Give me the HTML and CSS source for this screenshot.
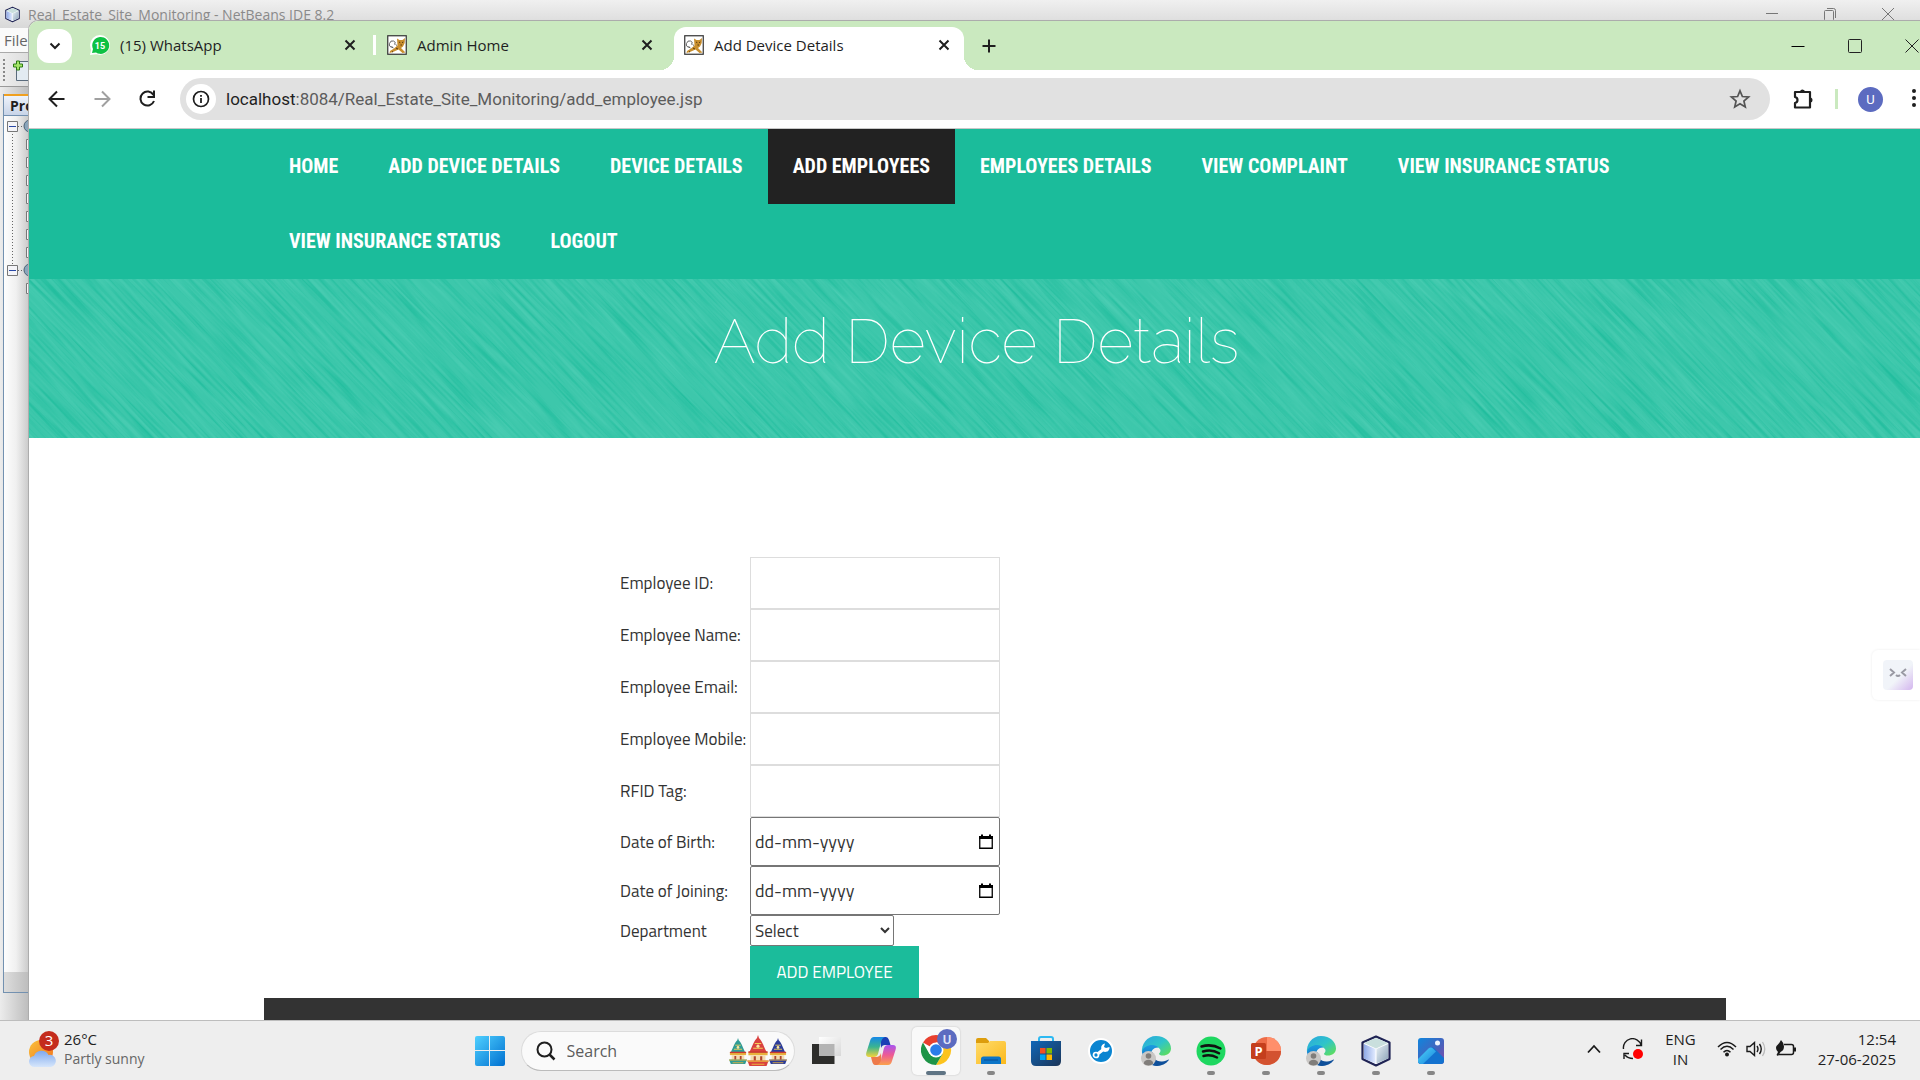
FILE: index.html
```html
<!DOCTYPE html>
<html lang="en">
<head>
<meta charset="utf-8">
<title>Add Device Details</title>
<link rel="stylesheet" href="styles.css">
</head>
<body>
<svg class="defs" aria-hidden="true">
  <defs>
    <linearGradient id="win" x1="0" y1="0" x2="1" y2="1"><stop offset="0" stop-color="#4fd0ff"/><stop offset="1" stop-color="#0070d0"/></linearGradient>
    <linearGradient id="sun" x1="0" y1="0" x2="1" y2="1"><stop offset="0" stop-color="#f9c23c"/><stop offset="1" stop-color="#f2711c"/></linearGradient>
    <linearGradient id="cloud" x1="0" y1="0" x2="0" y2="1"><stop offset="0" stop-color="#7fa9ee"/><stop offset="1" stop-color="#d6e6fb"/></linearGradient>
    <linearGradient id="fold" x1="0" y1="0" x2="1" y2="1"><stop offset="0" stop-color="#ffdb6b"/><stop offset="1" stop-color="#fbb91c"/></linearGradient>
    <linearGradient id="store" x1="0" y1="0" x2="1" y2="1"><stop offset="0" stop-color="#1067b8"/><stop offset="1" stop-color="#1c3557"/></linearGradient>
    <linearGradient id="edgeA" x1="0" y1="0" x2="1" y2="1"><stop offset="0" stop-color="#2aa6e0"/><stop offset=".5" stop-color="#2fc4c9"/><stop offset="1" stop-color="#66e24b"/></linearGradient>
    <linearGradient id="edgeB" x1="0" y1="0" x2="0" y2="1"><stop offset="0" stop-color="#1b9be0"/><stop offset="1" stop-color="#1266b5"/></linearGradient>
    <linearGradient id="cubeL" x1="0" y1="0" x2="1" y2="0"><stop offset="0" stop-color="#8fa9e6"/><stop offset="1" stop-color="#e3ecff"/></linearGradient>
    <linearGradient id="cubeR" x1="0" y1="0" x2="1" y2="1"><stop offset="0" stop-color="#e8f0f5"/><stop offset="1" stop-color="#8ba3b8"/></linearGradient>
    <linearGradient id="photo" x1="0" y1="0" x2="1" y2="1"><stop offset="0" stop-color="#0f86dd"/><stop offset=".6" stop-color="#4a60bb"/><stop offset="1" stop-color="#8a4aa8"/></linearGradient>
    <linearGradient id="peak" x1="0" y1="0" x2="1" y2="1"><stop offset="0" stop-color="#4fd6f7"/><stop offset="1" stop-color="#1780de"/></linearGradient>
    <linearGradient id="copA" x1="0" y1="0" x2="0" y2="1"><stop offset="0" stop-color="#1588e8"/><stop offset=".5" stop-color="#3bb58f"/><stop offset="1" stop-color="#f5d33a"/></linearGradient>
    <linearGradient id="copB" x1="0" y1="0" x2="0" y2="1"><stop offset="0" stop-color="#a855f0"/><stop offset=".5" stop-color="#ee5a95"/><stop offset="1" stop-color="#fba24a"/></linearGradient>
    <linearGradient id="pane" x1="0" y1="0" x2="1" y2="1"><stop offset="0" stop-color="#ffffff"/><stop offset="1" stop-color="#d8d8d8"/></linearGradient>
    <filter id="scratchDark" x="0" y="0" width="1" height="1" color-interpolation-filters="sRGB"><feTurbulence type="fractalNoise" baseFrequency=".012 .34" numOctaves="2" seed="4"/><feColorMatrix values="0 0 0 0 .09  0 0 0 0 .73  0 0 0 0 .6  2.6 0 0 0 -1.150"/></filter>
    <filter id="scratchLight" x="0" y="0" width="1" height="1" color-interpolation-filters="sRGB"><feTurbulence type="fractalNoise" baseFrequency=".015 .3" numOctaves="2" seed="9"/><feColorMatrix values="0 0 0 0 .38  0 0 0 0 .84  0 0 0 0 .75  2.4 0 0 0 -1.050"/></filter>
    <symbol id="cube" viewBox="0 0 30 32">
      <path d="M15 1.5 28.500 7.500V24L15 30.500 1.500 24V7.500Z" fill="#fff" stroke="#1f2354" stroke-width="2.200" stroke-linejoin="round"/>
      <path d="M15 3 27 8 15 13.500 3 8Z" fill="#c9dfdd"/><path d="M3 9l11.500 5v14.500L3 23.500Z" fill="url(#cubeL)"/><path d="M27 9l-11.500 5v14.500L27 23.500Z" fill="url(#cubeR)"/>
    </symbol>
    <symbol id="tomcat" viewBox="0 0 20 20">
      <rect x=".75" y=".75" width="18.500" height="18.500" fill="#fff" stroke="#333" stroke-width="1.200"/>
      <path d="M10 3.500l2.500 1.500h3L18 3l-.3 5-1.700 3.500-2 1.500 4.500 4.500-3 .5-4-3.500L6 17l-3.500 1 .5-2 4-2.500 3.500-3Z" fill="#c98f2e"/>
      <path d="M12 7l1.300.7m3-.7-1.300.7M13.500 10h1.500M9 13l2 1M5 16.500l1 .5" stroke="#4b300c" stroke-width=".9"/>
      <path d="M6 12.500Q1.500 12 2.500 8.500T6.500 6t1 3.500M4.500 11.500l2 1.500M8.500 9.500l1.500 1" fill="none" stroke="#555" stroke-width=".9"/>
    </symbol>
    <symbol id="close" viewBox="0 0 12 12"><path d="M1.500 1.500l9 9M10.500 1.500l-9 9" stroke="#1f1f1f" stroke-width="2" fill="none"/></symbol>
    <symbol id="edge" viewBox="0 0 30 30">
      <path d="M1 17C0 8 6 0 15 0s15 6 15 12.500c0 4.500-4 7-8 7-2.500 0-4-.8-4-1.800 0-.8 1.500-1.200 1.500-3 0-2.500-3-4-6-4C8 10.700 4 13 1 17Z" fill="url(#edgeA)"/>
      <path d="M1 16c1-5 6-7 10-7 3 0 5 1 6.500 2.500C12 11 9 16 10.500 20.500c1.200 4 5 8 9.500 8.500-9 3-18-3-19-13Z" fill="url(#edgeB)"/>
      <path d="M12 16c-1.500 5 3 10 9 9.500 3-.3 5-1.200 6-1.800.5-.3 1 .2.700.6C25 28 20.500 30 16 30c-5 0-8-5-6.500-10 .4-1.600 1.400-3 2.500-4Z" fill="#0e4f9a"/>
      <circle cx="7.500" cy="22.500" r="7.500" fill="#c9c7c5"/><circle cx="7.500" cy="20" r="2.800" fill="#807d7a"/><path d="M2.800 27.500c0-5 9.400-5 9.400 0-2 2.500-7 2.800-9.400 0Z" fill="#807d7a"/>
    </symbol>
    <symbol id="calendar" viewBox="0 0 14 16"><path d="M.75 3h12.500v11.250H.75Z" fill="none" stroke="#000" stroke-width="1.300"/><path d="M0 2h14v3H0ZM2 .5h2v2H2ZM10 .5h2v2h-2Z"/></symbol>
    <symbol id="chariot" viewBox="0 0 20 30">
      <path d="M10 0l1 3h-2ZM10 2c4 3 5 8 8 14H2C5 10 6 5 10 2Z"/>
      <path d="M1 16h18v3H1Z" fill="#e9b23c"/><path d="M1 16h18" stroke="#c93a32" stroke-width="1.500"/><path d="M3 19h14v6H3Z" fill="#f4dcb0"/><path d="M6 20h2v5H6ZM12 20h2v5h-2Z" fill="#b0472e"/>
      <path d="M7 8h6M5.500 12.500h9" stroke="#f3cf55" stroke-width="1"/><circle cx="10" cy="10.500" r="1.500" fill="#fbe7a0"/>
      <path d="M0 24h20l-2 5H2Z"/><path d="M0 24.500h20M4 27.500h12" stroke="#e9b23c" stroke-width="1"/>
    </symbol>
  </defs>
</svg>

<main class="desktop">
  <section class="ide" aria-label="NetBeans IDE">
    <header class="ide-title">
      <svg class="ide-logo"><use href="#cube"/></svg>
      <span class="ide-name">Real_Estate_Site_Monitoring - NetBeans IDE 8.2</span>
      <svg class="ide-ctl" viewBox="0 0 14 14"><path d="M1 6.500h12" stroke="#777"/></svg>
      <svg class="ide-ctl" viewBox="0 0 14 14"><path d="M1.500 4.500q0-1 1-1h7q1 0 1 1v8q0 1-1 1h-7q-1 0-1-1ZM4 1.500h6.500q2 0 2 2V11" fill="none" stroke="#777"/></svg>
      <svg class="ide-ctl" viewBox="0 0 14 14"><path d="M1 1l12 12M13 1 1 13" stroke="#777"/></svg>
    </header>
    <div class="ide-menu">File</div>
    <div class="ide-tools"><svg width="30" height="34" viewBox="0 0 30 34"><path d="M4 6v22" stroke="#888" stroke-width="2" stroke-dasharray="2 2"/><path d="M16.500 9v18.500H30V8.500H20Z" fill="#e3ebf2" stroke="#5a6b7c"/><path d="M16.500 8h3v3h3v3h-3v3h-3v-3h-3v-3h3Z" fill="#a5e668" stroke="#2c7a14"/></svg></div>
    <div class="ide-panel">
      <div class="ide-tab">Projects</div>
      <svg class="ide-tree" width="26" height="190" viewBox="0 0 26 190">
        <path d="M8.500 18v132" stroke="#666" stroke-dasharray="1 2"/><path d="M14 10.500h6M14 154.500h6" stroke="#666" stroke-dasharray="1 2"/>
        <g fill="#f4f4f8" stroke="#777"><path d="M3.500 5.500h10v10h-10ZM3.500 149.500h10v10h-10Z"/><path d="M22.500 23.500h10v10h-10ZM22.500 41.500h10v10h-10ZM22.500 59.500h10v10h-10ZM22.500 77.500h10v10h-10ZM22.500 95.500h10v10h-10ZM22.500 113.500h10v10h-10ZM22.500 131.500h10v10h-10ZM22.500 167.500h10v10h-10Z"/></g>
        <path d="M5 10.500h7M5 154.500h7" stroke="#2847a5"/><circle cx="26" cy="10" r="6" fill="#8aa5bb" stroke="#4a6175"/><circle cx="26" cy="154" r="6" fill="#8aa5bb" stroke="#4a6175"/>
      </svg>
      <div class="ide-scroll"></div>
    </div>
  </section>

  <section class="browser" aria-label="Browser">
    <header class="tabs">
      <button class="tab-search" aria-label="Search tabs"><svg width="12" height="8" viewBox="0 0 12 8"><path d="M1.500 1.500 6 6l4.500-4.500" fill="none" stroke="#1f1f1f" stroke-width="2"/></svg></button>
      <div class="tab tab-split">
        <svg class="favicon" viewBox="0 0 20 20"><circle cx="10" cy="10" r="10" fill="#fff"/><path d="M0 20l1.500-7L8 19Z" fill="#fff"/><path d="M2 18l1-4a8.500 8.500 0 1 1 3 3.500Z" fill="#0dc143"/><text x="10" y="13.500" text-anchor="middle" class="count">15</text></svg>
        <span class="tab-name">(15) WhatsApp</span><button class="tab-x" aria-label="Close tab"><svg><use href="#close"/></svg></button>
      </div>
      <div class="tab">
        <svg class="favicon"><use href="#tomcat"/></svg>
        <span class="tab-name">Admin Home</span><button class="tab-x" aria-label="Close tab"><svg><use href="#close"/></svg></button>
      </div>
      <div class="tab tab-active">
        <svg class="favicon"><use href="#tomcat"/></svg>
        <span class="tab-name">Add Device Details</span><button class="tab-x" aria-label="Close tab"><svg><use href="#close"/></svg></button>
      </div>
      <button class="tab-new" aria-label="New tab"><svg width="14" height="14" viewBox="0 0 14 14"><path d="M7 .5v13M.5 7h13" stroke="#1f1f1f" stroke-width="2"/></svg></button>
      <div class="win-ctl">
        <button aria-label="Minimise"><svg width="16" height="16" viewBox="0 0 16 16"><path d="M1.500 8.500h13" stroke="#000"/></svg></button>
        <button aria-label="Maximise"><svg width="16" height="16" viewBox="0 0 16 16"><rect x="1.500" y="1.500" width="13" height="13" rx="1" fill="none" stroke="#222"/></svg></button>
        <button aria-label="Close"><svg width="16" height="16" viewBox="0 0 16 16"><path d="M1.500 1.500l13 13M14.500 1.500l-13 13" stroke="#222"/></svg></button>
      </div>
    </header>
    <div class="toolbar">
      <button aria-label="Back"><svg width="24" height="24" viewBox="0 0 24 24"><path d="M19.500 12H5.500M12 4.500 4.500 12l7.500 7.500" fill="none" stroke="#1f1f1f" stroke-width="2"/></svg></button>
      <button aria-label="Forward"><svg width="24" height="24" viewBox="0 0 24 24"><path d="M4.500 12h14M12 4.500l7.500 7.500-7.500 7.500" fill="none" stroke="#a0a0a0" stroke-width="2"/></svg></button>
      <button aria-label="Reload"><svg width="24" height="24" viewBox="0 0 24 24"><path d="M18.500 8A7 7 0 1 0 19 14" fill="none" stroke="#1f1f1f" stroke-width="2"/><path d="M20 3.500V11h-7.500V9H18V3.500Z" fill="#1f1f1f"/></svg></button>
      <div class="address">
        <button class="site-info" aria-label="Site information"><svg width="18" height="18" viewBox="0 0 18 18"><circle cx="9" cy="9" r="7.500" fill="none" stroke="#1f1f1f" stroke-width="1.700"/><path d="M9 8v5M9 5v1.800" stroke="#1f1f1f" stroke-width="1.800"/></svg></button>
        <span class="url"><span class="host">localhost</span>:8084/Real_Estate_Site_Monitoring/add_employee.jsp</span>
        <button aria-label="Bookmark"><svg width="22" height="22" viewBox="0 0 22 22"><path d="M11 2.800l2.400 5.700 6.200.5-4.700 4 1.400 6L11 15.800 5.700 19l1.400-6L2.400 9l6.200-.5Z" fill="none" stroke="#555" stroke-width="1.700"/></svg></button>
      </div>
      <div class="bar-end">
        <button aria-label="Extensions"><svg width="24" height="24" viewBox="0 0 24 24"><path d="M4 5h15v15.500H4V16q2.500-.5 2.500-3T4 10Z" fill="none" stroke="#1f1f1f" stroke-width="2.200" stroke-linejoin="round"/><path d="M9 5a2.500 2.500 0 0 1 5 0ZM19 10.500a2.500 2.500 0 0 1 0 5Z" fill="#1f1f1f"/></svg></button>
        <span class="bar-sep"></span>
        <button class="avatar" aria-label="Profile">U</button>
        <button aria-label="Menu"><svg width="17" height="24" viewBox="0 0 17 24"><g fill="#1f1f1f"><circle cx="11" cy="4" r="2"/><circle cx="11" cy="11" r="2"/><circle cx="11" cy="18" r="2"/></g></svg></button>
      </div>
    </div>

    <div class="page">
      <nav class="nav">
        <a href="#">Home</a><a href="#">Add Device Details</a><a href="#">Device Details</a><a href="#" class="current">Add Employees</a><a href="#">Employees Details</a><a href="#">View Complaint</a><a href="#">View Insurance Status</a><a href="#">View Insurance Status</a><a href="#">Logout</a>
      </nav>
      <div class="banner">
        <svg class="scratches" aria-hidden="true"><g transform="rotate(46)"><rect class="dark" x="0" y="-1500" width="1600" height="1700" filter="url(#scratchDark)"/><rect class="light" x="0" y="-1500" width="1600" height="1700" filter="url(#scratchLight)"/></g></svg>
        <h1>Add Device Details</h1>
      </div>
      <form class="form">
        <table>
          <tr><td><label for="eid">Employee ID:</label></td><td><input class="field" id="eid" type="text"></td></tr>
          <tr><td><label for="ename">Employee Name:</label></td><td><input class="field" id="ename" type="text"></td></tr>
          <tr><td><label for="email">Employee Email:</label></td><td><input class="field" id="email" type="text"></td></tr>
          <tr><td><label for="mobile">Employee Mobile:</label></td><td><input class="field" id="mobile" type="text"></td></tr>
          <tr><td><label for="rfid">RFID Tag:</label></td><td><input class="field" id="rfid" type="text"></td></tr>
          <tr><td><label for="dob">Date of Birth:</label></td><td><div class="date"><input id="dob" type="text" placeholder="dd-mm-yyyy"><button type="button" aria-label="Pick date of birth"><svg><use href="#calendar"/></svg></button></div></td></tr>
          <tr><td><label for="doj">Date of Joining:</label></td><td><div class="date"><input id="doj" type="text" placeholder="dd-mm-yyyy"><button type="button" aria-label="Pick date of joining"><svg><use href="#calendar"/></svg></button></div></td></tr>
          <tr><td><label for="dept">Department</label></td><td><select id="dept"><option>Select</option></select></td></tr>
          <tr><td></td><td><button class="submit" type="button">Add Employee</button></td></tr>
        </table>
      </form>
      <footer class="footer"></footer>
      <div class="helper"><svg width="30" height="30" viewBox="0 0 30 30"><path d="M7 9l4 3.500L7 16M23 9l-4 3.500L23 16M13 15q2 2 4 0" fill="none" stroke="#9a9aa4" stroke-width="2"/></svg></div>
    </div>
  </section>
</main>

<footer class="taskbar">
  <div class="weather">
    <svg width="34" height="38" viewBox="0 0 34 38"><circle cx="14" cy="22" r="12" fill="url(#sun)"/><path d="M8 37a5.500 5.500 0 0 1-1-11 8 8 0 0 1 14.500-1A6 6 0 0 1 24 37Z" fill="url(#cloud)"/><circle cx="22" cy="11" r="10" fill="#c42b1c"/><text x="22" y="16" text-anchor="middle" class="badge">3</text></svg>
    <div class="lines"><span>26°C</span><span class="muted">Partly sunny</span></div>
  </div>
  <div class="apps">
    <button aria-label="Start"><svg width="30" height="30" viewBox="0 0 30 30"><rect width="30" height="30" rx="2" fill="url(#win)"/><path d="M14.500 0v30M0 14.500h30" stroke="#eee"/></svg></button>
    <label class="search"><svg width="20" height="20" viewBox="0 0 20 20"><circle cx="8.500" cy="8.500" r="7" fill="none" stroke="#1f1f1f" stroke-width="2"/><path d="M13.500 13.500l5 5" stroke="#1f1f1f" stroke-width="2.500"/></svg><input type="text" placeholder="Search" aria-label="Search"><svg width="60" height="32" viewBox="0 0 60 32"><use href="#chariot" x="0" y="3" width="20" height="27" fill="#2f9c96"/><use href="#chariot" x="40" y="3" width="20" height="27" fill="#2b3c9b"/><use href="#chariot" x="18" y="0" width="24" height="32" fill="#d9423f"/></svg></label>
    <button aria-label="Task view"><svg width="32" height="30" viewBox="0 0 32 30"><path d="M2 8h22.500v20H2Z" fill="#2d2d2b"/><path d="M9 1h22v19H9Z" fill="url(#pane)"/><path d="M9 8h15.500v12H9Z" fill="#b4b4b4"/></svg></button>
    <button aria-label="Copilot"><svg width="30" height="28" viewBox="0 0 30 28"><path d="M14 0h6q2 0 3 3l1.500 5H19q-3 0-4 3Z" fill="#1b3fb5"/><path d="M8 0h11q-3 1-4 5l-3 12q-1 3-4 3H3Q-1 20 .5 15L4 4Q5 0 8 0Z" fill="url(#copA)"/><path d="M16 28H9q-2 0-3-4l-1-4h5q4 0 5-4Z" fill="#ee7a4a"/><path d="M22 28H11q3-1 4-5l3-12q1-3 4-3h5q4 0 2.500 5L26 24q-1 4-4 4Z" fill="url(#copB)"/></svg></button>
    <button class="app-on" aria-label="Chrome"><svg width="36" height="38" viewBox="0 0 36 38"><circle cx="15" cy="22" r="15" fill="#fff"/><path d="M15 22 2 14.500A15 15 0 0 1 28 14.500H15Z" fill="#e8402f"/><path d="M15 22 28 14.500A15 15 0 0 1 15 37l6.500-11Z" fill="#fcc31e"/><path d="M2 14.500A15 15 0 0 0 15 37l6.500-11L15 22 8.500 26Z" fill="#1e9447"/><circle cx="15" cy="22" r="7.500" fill="#fff"/><circle cx="15" cy="22" r="5.800" fill="#2b7de9"/><circle cx="26" cy="11" r="10" fill="#5c6bc0"/><text x="26" y="16" text-anchor="middle" class="mini">U</text></svg></button>
    <button class="app-run" aria-label="File Explorer"><svg width="30" height="28" viewBox="0 0 30 28"><path d="M0 3q0-2 2-2h8l3 3v5H0Z" fill="#dd9d0c"/><path d="M0 6h12l2-2h14q2 0 2 2v21H0Z" fill="url(#fold)"/><path d="M5 27v-5q0-2.500 2.500-2.500h15q2.500 0 2.500 2.500v5Z" fill="#0c75c8"/><path d="M8 23h14" stroke="#0a4f93"/></svg></button>
    <button aria-label="Microsoft Store"><svg width="30" height="30" viewBox="0 0 30 30"><path d="M8 7V3q0-2 2-2h10q2 0 2 2v4" fill="none" stroke="#2db9f2" stroke-width="2"/><path d="M0 5h30v20q0 5-5 5H5q-5 0-5-5Z" fill="url(#store)"/><path d="M9 12h5.500v5.500H9Z" fill="#f25022"/><path d="M15.500 12H21v5.500h-5.500Z" fill="#7fba00"/><path d="M9 18.500h5.500V24H9Z" fill="#00a4ef"/><path d="M15.500 18.500H21V24h-5.500Z" fill="#ffb900"/></svg></button>
    <button aria-label="Repair tool"><svg width="26" height="26" viewBox="0 0 26 26"><circle cx="13" cy="13" r="12" fill="#0a85d1" stroke="#fff" stroke-width="2"/><path d="M9.500 16l6.500-5" stroke="#fff" stroke-width="3"/><circle cx="8" cy="17" r="2.500" fill="none" stroke="#fff" stroke-width="1.700"/><path d="M21.500 9a4.200 4.200 0 1 1-4.500-3.500l-1 3.500 2 1Z" fill="#fff"/></svg></button>
    <button aria-label="Edge"><svg width="30" height="30"><use href="#edge"/></svg></button>
    <button class="app-run" aria-label="Spotify"><svg width="30" height="30" viewBox="0 0 30 30"><circle cx="15" cy="15" r="14.500" fill="#1ed760"/><path d="M5.500 10.500q10-3 19 2M7 15.500q9-2.500 16 1.800M7.500 20q7-1.800 13.500 1.500" fill="none" stroke="#111" stroke-width="2.500" stroke-linecap="round"/></svg></button>
    <button class="app-run" aria-label="PowerPoint"><svg width="30" height="28" viewBox="0 0 30 28"><circle cx="16" cy="14" r="14" fill="#ed6c47"/><path d="M16 0a14 14 0 0 1 14 14H16Z" fill="#ff8f6b"/><path d="M2 14h28a14 14 0 0 1-28 0Z" fill="#d35230"/><rect y="6" width="15" height="16" rx="1.500" fill="#c43e1c"/><text x="7.500" y="18.500" text-anchor="middle" class="letter">P</text></svg></button>
    <button class="app-run" aria-label="Edge profile"><svg width="30" height="30"><use href="#edge"/></svg></button>
    <button class="app-run" aria-label="NetBeans"><svg width="30" height="32"><use href="#cube"/></svg></button>
    <button class="app-run" aria-label="Photos"><svg width="28" height="28" viewBox="0 0 28 28"><rect x="1" y="1" width="26" height="26" rx="3" fill="url(#photo)"/><path d="M1 23 13 11q2-1.500 4 0l10 10v3q0 3-3 3H4q-3 0-3-4Z" fill="#1372cf"/><path d="M1 22 11.500 11.500Q14 9.500 16.500 12l2.500 2.500L6 27H4q-3 0-3-3Z" fill="url(#peak)"/><circle cx="20.500" cy="6" r="2.500" fill="#eef4ff"/></svg></button>
  </div>
  <div class="tray">
    <svg width="14" height="10" viewBox="0 0 14 10"><path d="M1 8.500l6-6.500 6 6.500" fill="none" stroke="#1a1a1a" stroke-width="1.800"/></svg>
    <svg width="22" height="22" viewBox="0 0 22 22"><path d="M1.500 11A9 9 0 0 1 19 7M19.500 1.500V7.500H14M11 20.500Q6 20.500 3 17M2 21v-5.500h5" fill="none" stroke="#1a1a1a" stroke-width="1.400"/><circle cx="16" cy="16" r="5" fill="#f00"/></svg>
    <div class="lines lang"><span>ENG</span><span>IN</span></div>
    <div class="status">
      <svg width="20" height="16" viewBox="0 0 20 16"><path d="M1 6q9-9 18 0M3.500 8.500q6.500-6.500 13 0M6.500 11.300q3.500-3.500 7 0" fill="none" stroke="#1a1a1a" stroke-width="1.500"/><circle cx="10" cy="13.500" r="2" fill="#1a1a1a"/></svg>
      <svg width="20" height="16" viewBox="0 0 20 16"><path d="M1 5.500h3L8.500 1.500v13L4 10.500H1ZM11 5q2 3 0 6M13.500 3q3.500 5 0 10" fill="none" stroke="#1a1a1a" stroke-width="1.400"/><path d="M16.500 1q4.500 7 0 14" fill="none" stroke="#bbb" stroke-width="1.300"/></svg>
      <svg width="22" height="18" viewBox="0 0 22 18"><path d="M9 4.500h7.500q2 0 2 2v6q0 2-2 2h-13" fill="none" stroke="#1a1a1a" stroke-width="1.500"/><path d="M19 7.500h2v4h-2Z" fill="#1a1a1a"/><path d="M6 0q3 3 3 6.500 0 4-3.500 5.500L3 16 1.500 15 3 12Q0 9 1.500 6 4 4 6 0Z" fill="#1a1a1a"/></svg>
    </div>
    <div class="lines clock"><span>12:54</span><span>27-06-2025</span></div>
  </div>
</footer>
</body>
</html>
```

FILE: styles.css
```css
* { box-sizing: border-box; }
body { margin: 0; height: 100vh; display: flex; flex-direction: column; overflow: hidden; font-family: "Open Sans", "Noto Sans", sans-serif; font-size: 15px; color: #1f1f1f; }
button { border: 0; padding: 0; background: none; font: inherit; color: inherit; display: flex; align-items: center; justify-content: center; flex: none; }
svg { display: block; flex: none; }
.defs { position: absolute; width: 0; height: 0; }

.desktop { flex: 1; min-height: 0; position: relative; overflow: hidden; }

/* IDE window behind the browser */
.ide { height: 100%; display: flex; flex-direction: column; background: linear-gradient(90deg, #ececec 0, #bcbcbc 29px); }
.ide-title { height: 28px; flex: none; display: flex; align-items: center; gap: 44px; padding: 0 25px 0 5px; background: linear-gradient(#f0f0f0, #d8d8d8); }
.ide-logo { width: 15px; height: 17px; }
.ide-name { flex: 1; margin-left: -36px; font-size: 14px; color: #8a8a8a; }
.ide-ctl { width: 14px; height: 14px; }
.ide-menu { height: 25px; flex: none; padding-left: 4px; line-height: 25px; color: #666; background: #fafafa; border-bottom: 1px solid #aaa; }
.ide-tools { height: 34px; flex: none; border-bottom: 1px solid #999; background: linear-gradient(90deg, #eee, #ddd 29px); }
.ide-panel { width: 60px; flex: 1; display: flex; flex-direction: column; margin: 7px 0 27px 3px; border: 1px solid #7391b0; border-top: 0; background: linear-gradient(90deg, #fdfdfd 0, #f0f0f0 12px, #c6c6c6 26px); }
.ide-tab { height: 22px; padding-left: 6px; font-weight: 700; font-size: 14px; line-height: 20px; border-top: 2px solid #f0a020; border-bottom: 1px solid #7391b0; background: linear-gradient(#eef3fb, #c8d4e8); }
.ide-scroll { height: 20px; margin-top: auto; background: linear-gradient(90deg, #ddd, #bbb 26px); }

/* Browser window */
.browser { position: absolute; left: 28px; top: 20px; right: 0; bottom: 0; display: flex; flex-direction: column; border: 1px solid #acacac; border-width: 1px 0 0 1px; border-radius: 10px 0 0 0; overflow: hidden; background: #fff; }
.tabs { height: 49px; flex: none; display: flex; align-items: center; padding-left: 8px; background: #cae9bf; }
.tab-search { width: 35px; height: 34px; margin-right: 8px; border-radius: 12px; background: #fff; }
.tab { width: 290px; height: 43px; margin-right: 7px; align-self: flex-end; display: flex; align-items: center; gap: 10px; padding: 0 14px 8px 10px; position: relative; }
.tab-split::after { content: ""; position: absolute; right: -6px; top: 8px; width: 3px; height: 20px; background: #fff; }
.tab-active { margin-right: 0; background: #fff; border-radius: 12px 12px 0 0; }
.tab-active::before, .tab-active::after { content: ""; position: absolute; bottom: 0; width: 14px; height: 14px; }
.tab-active::before { left: -14px; background: radial-gradient(circle at 0 0, transparent 14px, #fff 14px); }
.tab-active::after { right: -14px; background: radial-gradient(circle at 100% 0, transparent 14px, #fff 14px); }
.favicon { width: 20px; height: 20px; }
.count { font: 700 9px Roboto, sans-serif; fill: #fff; }
.tab-name { flex: 1; white-space: nowrap; }
.tab-x svg { width: 12px; height: 12px; }
.tab-new { margin-left: 18px; }
.win-ctl { display: flex; gap: 41px; margin-left: auto; }

.toolbar { height: 59px; flex: none; display: flex; align-items: center; gap: 21px; padding-left: 16px; border-bottom: 1px solid #c8c8c8; background: #fff; }
.address { flex: 1; height: 42px; display: flex; align-items: center; padding: 0 19px 0 6px; border-radius: 21px; background: #e1e1e1; }
.site-info { width: 30px; height: 30px; margin-right: 10px; border-radius: 50%; background: #fff; }
.url { flex: 1; font-family: Roboto, sans-serif; font-size: 17px; color: #5c5c5c; white-space: nowrap; }
.host { color: #1f1f1f; }
.bar-end { display: flex; align-items: center; gap: 20px; }
.bar-sep { width: 3px; height: 20px; background: #cae9bf; }
.avatar { width: 25px; height: 25px; border-radius: 50%; background: #5c6bc0; color: #fff; font: 13px Roboto, sans-serif; }

/* Web page */
.page { flex: 1; min-height: 0; overflow: hidden; position: relative; font-family: "Titillium Web", sans-serif; font-size: 17px; color: #333; }
.nav { display: flex; flex-wrap: wrap; padding: 0 194px 0 235px; background: #1bbc9b; }
.nav a { height: 75px; padding: 0 25px; font: 700 20px/75px "Roboto Condensed", Roboto, sans-serif; color: #fff; text-transform: uppercase; text-decoration: none; }
.nav .current { background: #222; }
.banner { height: 159px; position: relative; overflow: hidden; background: #3dc7ab; }
.scratches { position: absolute; left: 0; top: 0; width: 100%; height: 100%; }
.dark { opacity: .7; }
.light { opacity: .4; }
h1 { position: relative; margin: 0; padding: 25px 0 0 4px; font: 100 62px/75px Raleway, Lato, sans-serif; color: #fff; text-align: center; }
.form { padding: 119px 0 0 591px; }
table { border-collapse: collapse; }
td { padding: 0; }
td:first-child { width: 130px; white-space: nowrap; }
.field { display: block; width: 250px; height: 52px; border: 1px solid #ddd; background: #fff; font: inherit; }
.date { width: 250px; height: 49px; display: flex; align-items: center; padding: 0 6px 0 4px; border: 1px solid #767676; border-radius: 2px; }
.date input { flex: 1; min-width: 0; padding: 0; border: 0; font: inherit; font-size: 18px; }
.date input::placeholder { color: #333; opacity: 1; }
.date svg { width: 14px; height: 16px; }
select { display: block; width: 144px; height: 31px; border: 1px solid #767676; border-radius: 2px; background: #fff; font: inherit; color: #333; }
.submit { width: 169px; height: 52px; background: #1bbc9b; color: #fff; text-transform: uppercase; }
.footer { height: 80px; margin: 0 194px 0 235px; background: #333; }
.helper { position: absolute; right: 0; top: 521px; width: 48px; height: 50px; padding: 10px 0 0 11px; border-radius: 6px 0 0 6px; background: #fff; box-shadow: 0 0 3px rgba(0, 0, 0, .08); }
.helper svg { border-radius: 4px; background: linear-gradient(135deg, #f1f4f9 55%, #d3b5ee); }

/* Taskbar */
.taskbar { height: 60px; flex: none; display: grid; grid-template-columns: 1fr auto 1fr; align-items: center; border-top: 1px solid #bdbdbd; background: #eee; }
.weather { display: flex; align-items: center; gap: 3px; padding: 0 0 4px 27px; }
.lines { display: flex; flex-direction: column; line-height: 20px; white-space: nowrap; }
.muted { color: #666; font-size: 14px; }
.badge { font: 15px "Open Sans", sans-serif; fill: #fff; }
.mini { font: 600 13px Roboto, sans-serif; fill: #dfe3f7; }
.letter { font: 700 13px "Open Sans", sans-serif; fill: #fff; }
.apps { display: flex; align-items: center; gap: 7px; }
.apps button { width: 48px; height: 48px; border-radius: 5px; position: relative; }
.apps .app-on { background: #f9f9f9; box-shadow: 0 0 2px rgba(0, 0, 0, .2); }
.app-on svg { margin: -8px 0 0 6px; }
.app-run::after, .app-on::after { content: ""; position: absolute; left: 20px; bottom: 0; width: 8px; height: 4px; border-radius: 2px; background: #868686; }
.app-on::after { left: 14px; width: 20px; background: #5f7484; }
.search { width: 274px; height: 40px; display: flex; align-items: center; gap: 11px; padding: 0 6px 0 14px; border: 1px solid #dcdcdc; border-bottom-color: #bbb; border-radius: 20px; background: #fafafa; }
.search input { flex: 1; min-width: 0; padding: 0; border: 0; background: none; font: 16px "Open Sans", sans-serif; }
.search input::placeholder { color: #5c5c5c; opacity: 1; }
.tray { display: flex; align-items: center; justify-content: flex-end; gap: 21px; padding: 0 24px 3px 0; }
.status { display: flex; align-items: center; gap: 9px; }
.lang { align-items: center; }
.clock { align-items: flex-end; }
```
